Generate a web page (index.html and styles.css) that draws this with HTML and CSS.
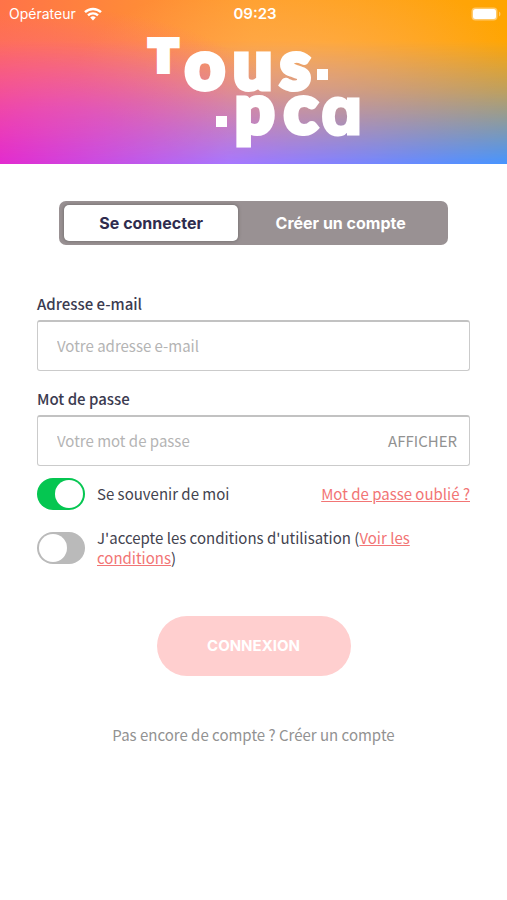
FILE: index.html
```html
<!DOCTYPE html>
<html lang="fr">
<head>
<meta charset="utf-8">
<meta name="viewport" content="width=device-width, initial-scale=1">
<title>Tous.pca</title>
<link rel="stylesheet" href="styles.css">
</head>
<body>
<header class="hero">
  <div class="status">
    <div class="carrier">
      <span>Opérateur</span>
      <svg class="wifi" width="18" height="14" viewBox="0 0 18 14" aria-hidden="true">
        <g fill="none" stroke="#fff" stroke-width="2.4">
          <path d="M1 5.2a11.6 11.6 0 0 1 16 0"/>
          <path d="M4 8.4a7.2 7.2 0 0 1 10 0"/>
        </g>
        <path fill="#fff" d="M9 13.5 6.2 10.6a4 4 0 0 1 5.6 0z"/>
      </svg>
    </div>
    <time class="clock">09:23</time>
    <svg class="battery" width="30" height="14" viewBox="0 0 30 14" aria-hidden="true">
      <rect x=".5" y=".5" width="26" height="13" rx="4" fill="#fff" opacity=".4"/>
      <rect x="2" y="2" width="23" height="10" rx="2.5" fill="#fff"/>
      <path d="M28 4.5c2 1 2 4 0 5z" fill="#fff" opacity=".4"/>
    </svg>
  </div>
  <svg class="logo" width="216" height="124" viewBox="0 0 216 124" role="img" aria-label="Tous.pca">
    <text class="cap" x="2" y="40">T</text>
    <text class="word" x="39 87 134" y="57">ous</text>
    <rect x="171" y="37" width="11" height="11"/>
    <rect x="70" y="84" width="11" height="11"/>
    <text class="word" x="89 138" y="101">pc</text>
    <text class="tail" x="175" y="102">a</text>
  </svg>
</header>
<main class="page">
  <nav class="tabs">
    <button class="tab active" type="button">Se connecter</button>
    <button class="tab" type="button">Créer un compte</button>
  </nav>
  <form class="form">
    <label class="label" for="email">Adresse e-mail</label>
    <div class="field"><input class="input" id="email" type="email" placeholder="Votre adresse e-mail"></div>
    <label class="label" for="password">Mot de passe</label>
    <div class="field">
      <input class="input" id="password" type="password" placeholder="Votre mot de passe">
      <button class="show" type="button">AFFICHER</button>
    </div>
    <div class="option">
      <input class="switch" id="remember" type="checkbox" checked>
      <label class="text" for="remember">Se souvenir de moi</label>
      <a class="link" href="#oubli">Mot de passe oublié ?</a>
    </div>
    <div class="option">
      <input class="switch" id="terms" type="checkbox">
      <label class="text" for="terms">J'accepte les conditions d'utilisation (<a class="link" href="#conditions">Voir les conditions</a>)</label>
    </div>
    <button class="submit" type="submit" disabled>CONNEXION</button>
  </form>
  <p class="signup">Pas encore de compte ? <a href="#compte">Créer un compte</a></p>
</main>
</body>
</html>
```
FILE: styles.css
```css
* {
  box-sizing: border-box;
}

body {
  margin: 0;
  background: #fff;
  color: #43434f;
  font: 15px/20px "Noto Sans CJK SC", "Noto Sans", sans-serif;
}

button,
input {
  margin: 0;
  font: inherit;
}

.hero {
  position: relative;
  isolation: isolate;
  display: flex;
  flex-direction: column;
  align-items: center;
  padding-bottom: 8px;
  color: #fff;
  background: linear-gradient(to right, #e32bd0, #a877ff 45%, #4795ff);
}

/* warm upper half that fades into the cool base */
.hero::before {
  content: "";
  position: absolute;
  inset: 0;
  z-index: -1;
  background:
    radial-gradient(ellipse 45% 75% at 12% 80%, rgb(250 95 150 / 85%) 20%, transparent),
    radial-gradient(ellipse 45% 60% at 60% 45%, rgb(255 180 110 / 60%), transparent),
    linear-gradient(to right, #ff7348, #ff9f2a 50%, #ffa500);
  -webkit-mask-image: linear-gradient(to bottom, #000 25%, rgb(0 0 0 / 65%) 55%, transparent);
  mask-image: linear-gradient(to bottom, #000 25%, rgb(0 0 0 / 65%) 55%, transparent);
}

.status {
  display: grid;
  grid-template-columns: 1fr auto 1fr;
  align-items: center;
  width: 100%;
  height: 28px;
  padding: 0 6px 0 9px;
  font: 14px/20px Inter, sans-serif;
}

.carrier {
  display: flex;
  align-items: center;
  gap: 8px;
}

.clock {
  font-size: 15px;
  font-weight: 600;
}

.battery {
  justify-self: end;
}

.logo {
  display: block;
  overflow: visible;
  margin-top: 4px;
  fill: #fff;
  font-weight: 900;
}

.cap {
  font-family: Inter, sans-serif;
  font-size: 45px;
  stroke: #fff;
  stroke-width: 4px;
}

.word {
  font-family: Lato, sans-serif;
  font-size: 69px;
  stroke: #fff;
  stroke-width: 5px;
}

.tail {
  font-family: Inter, sans-serif;
  font-size: 65px;
  font-weight: 700;
  font-feature-settings: "cv11";
  stroke: #fff;
  stroke-width: 3px;
}

.page {
  padding: 37px;
}

.tabs {
  display: flex;
  margin: 0 22px 49px;
  padding: 4px 5px;
  border-radius: 7px;
  background: #999193;
}

.tab {
  flex: 1 1 54%;
  height: 36px;
  padding: 0;
  border: 0;
  border-radius: 5px;
  background: none;
  color: #fff;
  font: 700 16px/20px Inter, sans-serif;
}

.tab.active {
  flex-basis: 46%;
  background: #fff;
  color: #2f2c4e;
  box-shadow: 0 0 3px 1px #7c7778;
}

.form {
  display: flex;
  flex-direction: column;
}

.label {
  margin-bottom: 6px;
  color: #3b3b50;
  font-weight: 500;
}

.field {
  display: flex;
  align-items: center;
  height: 51px;
  margin-bottom: 18px;
  padding: 0 12px 0 19px;
  border: 1px solid #cbcbcb;
  border-top: 2px solid #c2c2c2;
  border-radius: 3px;
}

.input {
  flex: 1;
  min-width: 0;
  padding: 0;
  border: 0;
  outline: 0;
  background: none;
}

.input::placeholder {
  color: #b4b4b4;
  opacity: 1;
}

.show {
  padding: 0;
  border: 0;
  background: none;
  color: #929292;
}

.option {
  display: flex;
  align-items: center;
  gap: 12px;
  min-height: 40px;
  margin-bottom: 14px;
}

.field + .option {
  margin-top: -10px;
}

.text {
  flex: 1;
}

.link {
  color: #f27575;
}

.switch {
  flex: none;
  width: 48px;
  height: 32px;
  padding: 2px;
  border-radius: 16px;
  background: #bababa;
  appearance: none;
}

.switch::before {
  content: "";
  display: block;
  width: 28px;
  height: 28px;
  border-radius: 50%;
  background: #fff;
}

.switch:checked {
  background: #05c651;
}

.switch:checked::before {
  margin-left: auto;
}

.submit {
  align-self: center;
  width: 194px;
  height: 60px;
  margin: 34px 0 49px;
  border: 0;
  border-radius: 30px;
  background: #ffcfcf;
  color: #fff;
  font: 700 15px/20px Inter, sans-serif;
}

.signup {
  margin: 0;
  color: #929292;
  text-align: center;
}

.signup a {
  color: inherit;
  text-decoration: none;
}
```
